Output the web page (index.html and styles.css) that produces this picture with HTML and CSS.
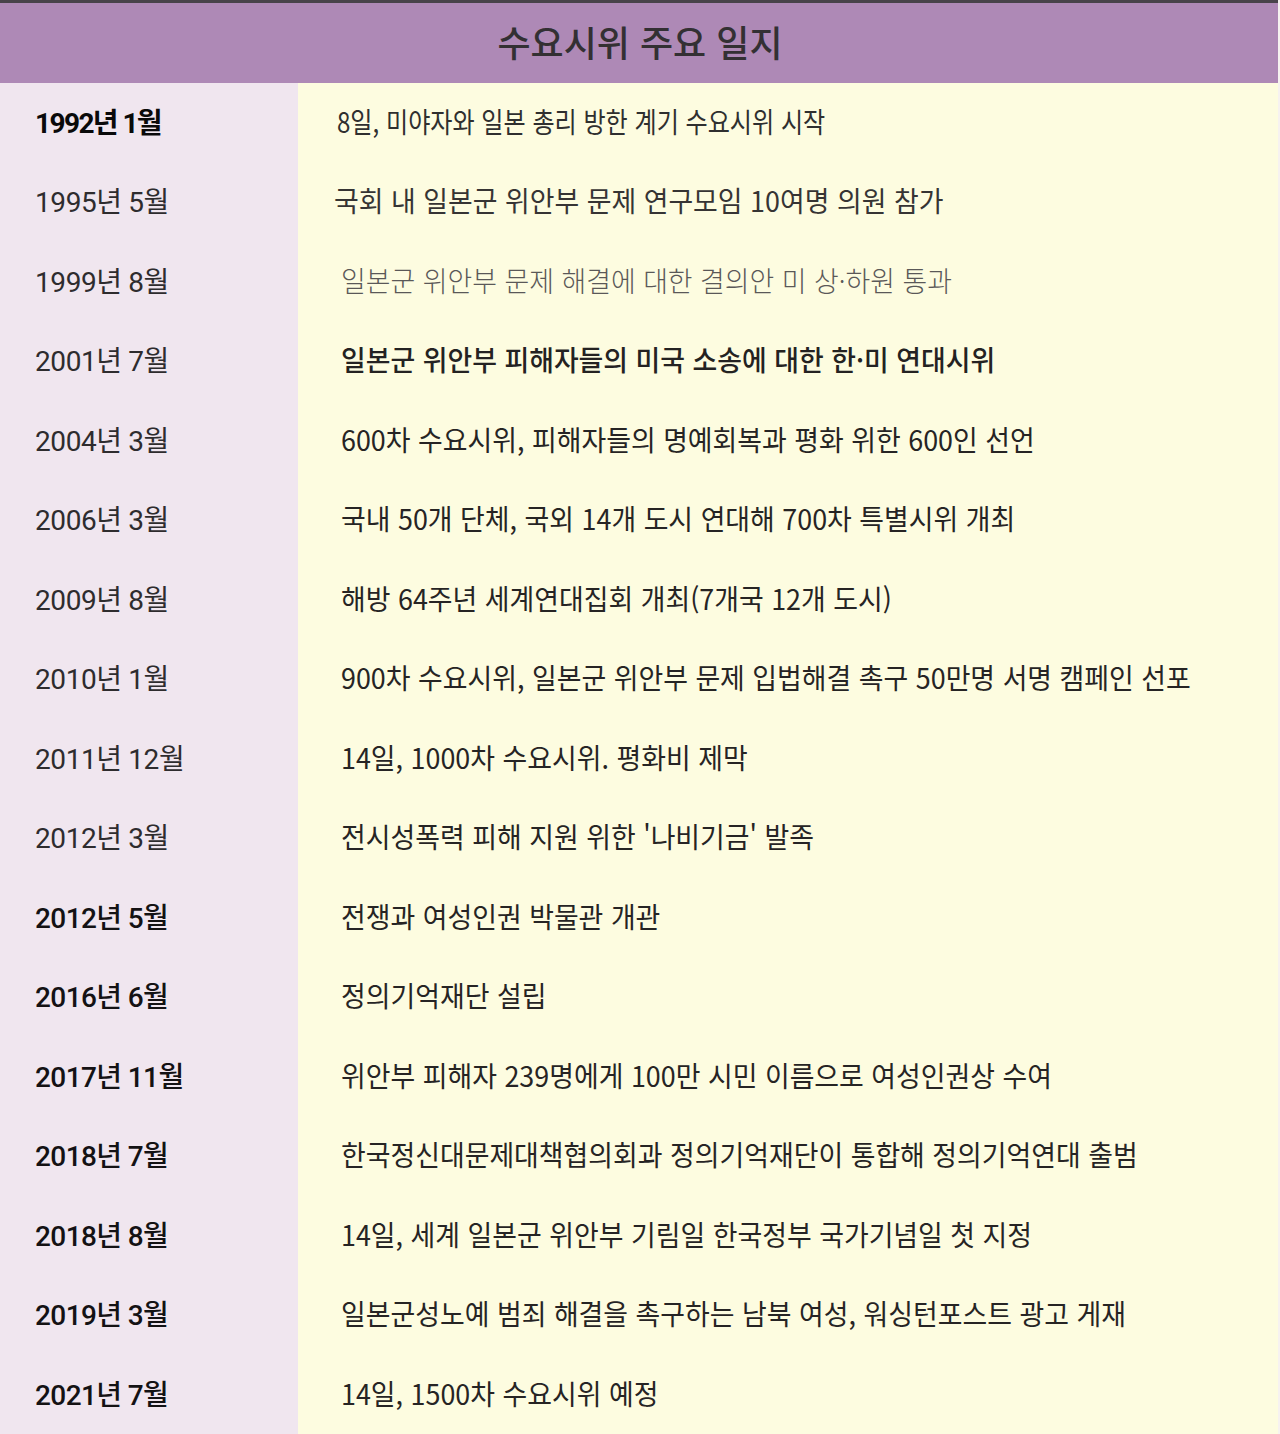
FILE: index.html
```html
<!DOCTYPE html>
<html lang="ko">
<head>
<meta charset="utf-8">
<title>수요시위 주요 일지</title>
<link rel="stylesheet" href="styles.css">
</head>
<body>
<div class="board">
  <div class="title-bar"><h1 class="title">수요시위 주요 일지</h1></div>
  <div class="rows">
    <div class="row"><div class="date date-strong">1992년 1월</div><div class="event event-first"><span class="txt txt-narrow">8일, 미야자와 일본 총리 방한 계기 수요시위 시작</span></div></div>
    <div class="row"><div class="date">1995년 5월</div><div class="event event-shift"><span class="txt txt-regular">국회 내 일본군 위안부 문제 연구모임 10여명 의원 참가</span></div></div>
    <div class="row"><div class="date">1999년 8월</div><div class="event"><span class="txt txt-light">일본군 위안부 문제 해결에 대한 결의안 미 상·하원 통과</span></div></div>
    <div class="row"><div class="date">2001년 7월</div><div class="event"><span class="txt txt-bold">일본군 위안부 피해자들의 미국 소송에 대한 한·미 연대시위</span></div></div>
    <div class="row"><div class="date">2004년 3월</div><div class="event"><span class="txt">600차 수요시위, 피해자들의 명예회복과 평화 위한 600인 선언</span></div></div>
    <div class="row"><div class="date">2006년 3월</div><div class="event"><span class="txt">국내 50개 단체, 국외 14개 도시 연대해 700차 특별시위 개최</span></div></div>
    <div class="row"><div class="date">2009년 8월</div><div class="event"><span class="txt">해방 64주년 세계연대집회 개최(7개국 12개 도시)</span></div></div>
    <div class="row"><div class="date">2010년 1월</div><div class="event"><span class="txt">900차 수요시위, 일본군 위안부 문제 입법해결 촉구 50만명 서명 캠페인 선포</span></div></div>
    <div class="row"><div class="date">2011년 12월</div><div class="event"><span class="txt">14일, 1000차 수요시위. 평화비 제막</span></div></div>
    <div class="row"><div class="date">2012년 3월</div><div class="event"><span class="txt">전시성폭력 피해 지원 위한 '나비기금' 발족</span></div></div>
    <div class="row"><div class="date date-dark">2012년 5월</div><div class="event"><span class="txt">전쟁과 여성인권 박물관 개관</span></div></div>
    <div class="row"><div class="date date-dark">2016년 6월</div><div class="event"><span class="txt">정의기억재단 설립</span></div></div>
    <div class="row"><div class="date date-dark">2017년 11월</div><div class="event"><span class="txt">위안부 피해자 239명에게 100만 시민 이름으로 여성인권상 수여</span></div></div>
    <div class="row"><div class="date date-dark">2018년 7월</div><div class="event"><span class="txt">한국정신대문제대책협의회과 정의기억재단이 통합해 정의기억연대 출범</span></div></div>
    <div class="row"><div class="date date-dark">2018년 8월</div><div class="event"><span class="txt">14일, 세계 일본군 위안부 기림일 한국정부 국가기념일 첫 지정</span></div></div>
    <div class="row"><div class="date date-dark">2019년 3월</div><div class="event"><span class="txt">일본군성노예 범죄 해결을 촉구하는 남북 여성, 워싱턴포스트 광고 게재</span></div></div>
    <div class="row"><div class="date date-dark">2021년 7월</div><div class="event"><span class="txt">14일, 1500차 수요시위 예정</span></div></div>
  </div>
</div>
</body>
</html>
```
FILE: styles.css
```css
html, body {
  margin: 0;
  padding: 0;
  background: #fdfce0;
}

.board {
  width: 1278px;
  height: 1434px;
  border-right: 2px solid #f6f2f0;
  overflow: hidden;
  font-family: "Noto Sans CJK KR", sans-serif;
}

.title-bar {
  height: 83px;
  box-sizing: border-box;
  padding-bottom: 5px;
  border-top: 3px solid #48434a;
  background: #ae89b6;
  display: flex;
  align-items: center;
  justify-content: center;
}

.title {
  margin: 0;
  font-family: "Noto Sans CJK KR", sans-serif;
  font-size: 36px;
  font-weight: 500;
  color: #333033;
  line-height: 1;
  padding-left: 2px;
}

.rows {
  display: flex;
  flex-direction: column;
}

.row {
  height: 79.5px;
  display: flex;
  align-items: stretch;
  background: #fdfce0;
}

.date {
  width: 263px;
  padding-left: 35px;
  padding-bottom: 4px;
  display: flex;
  align-items: center;
  background: #f0e6ef;
  font-family: Roboto, "Noto Sans CJK KR", sans-serif;
  font-size: 28px;
  font-weight: 400;
  color: #2e2c2e;
  letter-spacing: -0.4px;
  white-space: nowrap;
}

.date-strong {
  color: #0a0a0a;
  font-weight: 700;
  letter-spacing: -1.6px;
}

.date-dark {
  color: #141214;
  font-weight: 500;
  letter-spacing: -0.6px;
}

.event {
  flex: 1;
  padding-left: 43px;
  padding-bottom: 4px;
  display: flex;
  align-items: center;
  white-space: nowrap;
}

.event-first {
  padding-left: 39px;
}

.event-shift {
  padding-left: 36px;
}

.txt {
  display: inline-block;
  font-size: 28px;
  font-weight: 400;
  color: #262424;
  transform: scaleX(0.96);
  transform-origin: left center;
}

.txt-narrow {
  transform: scaleX(0.86);
  color: #2f2f2f;
}

.txt-regular {
  color: #363434;
}

.txt-light {
  font-weight: 300;
  color: #5a5858;
}

.txt-bold {
  font-weight: 500;
  color: #242222;
}
```
